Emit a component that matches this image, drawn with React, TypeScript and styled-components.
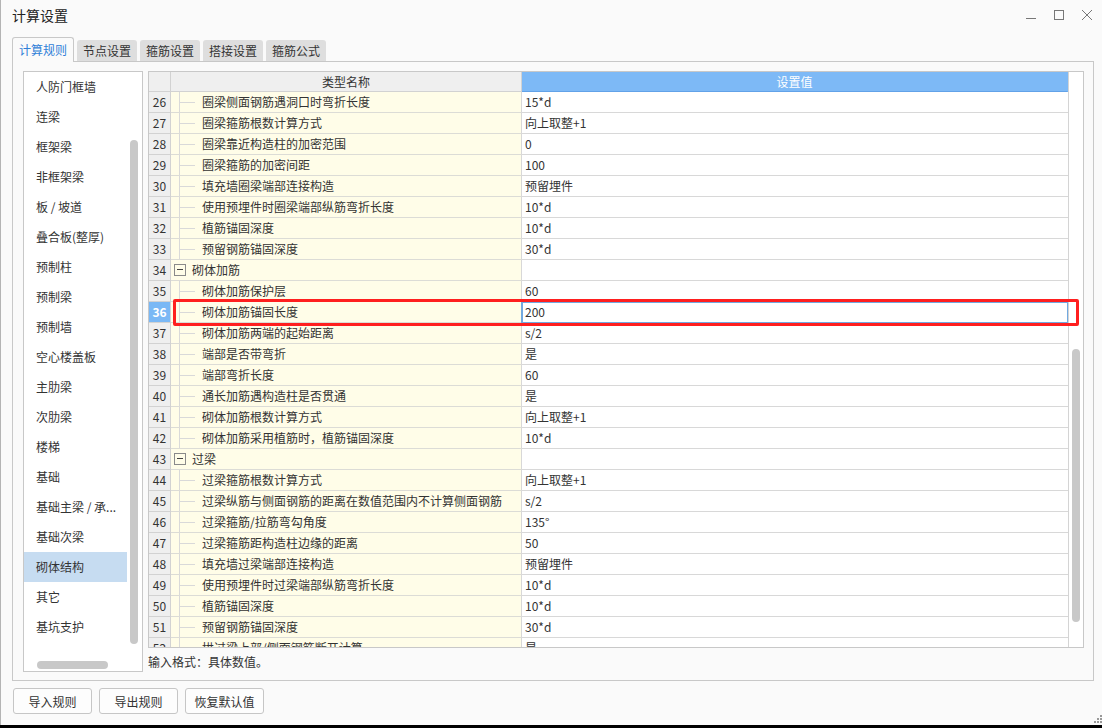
import React from "react";
import styled, { createGlobalStyle } from "styled-components";

const FONT = `"Microsoft YaHei", "Noto Sans CJK SC", "Noto Sans", sans-serif`;

const Global = createGlobalStyle`
  html, body { margin: 0; padding: 0; background: #000; }
  body { font-family: ${FONT}; font-size: 12px; color: #333; }
  * { box-sizing: border-box; }
`;

const Window = styled.div`
  position: relative;
  width: 1102px;
  height: 725px;
  background: #fafafa;
  border-left: 1px solid #b4b4b4;
  display: flex;
  flex-direction: column;
  overflow: hidden;
`;

const TitleBar = styled.div`
  height: 30px;
  display: flex;
  align-items: center;
  justify-content: space-between;
  padding: 0 9px 0 11px;
`;

const Title = styled.div`
  font-size: 14px;
  line-height: 20px;
  color: #222;
`;

const Controls = styled.div`
  display: flex;
  align-items: center;
  gap: 16px;
`;

const TabRow = styled.div`
  height: 31px;
  display: flex;
  align-items: flex-end;
  padding-left: 11px;
`;

const Tab = styled.div<{ $active?: boolean }>`
  position: relative;
  z-index: 1;
  width: ${(p) => (p.$active ? "62px" : "60px")};
  height: ${(p) => (p.$active ? "25px" : "21px")};
  margin-bottom: ${(p) => (p.$active ? "-1px" : "0")};
  margin-left: ${(p) => (p.$active ? "0" : "3px")};
  background: ${(p) => (p.$active ? "#fafafa" : "#dedede")};
  border: ${(p) => (p.$active ? "1px solid #c8c8c8" : "none")};
  border-bottom: none;
  border-radius: 3px 3px 0 0;
  color: ${(p) => (p.$active ? "#2f80d8" : "#333")};
  display: flex;
  align-items: center;
  justify-content: center;
  font-size: 12px;
  line-height: 20px;
`;

const Panel = styled.div`
  margin: 0 8px 0 11px;
  height: 620px;
  border: 1px solid #c8c8c8;
  display: flex;
  gap: 5px;
  padding: 9px 9px 8px 10px;
`;

const List = styled.div`
  width: 120px;
  height: 601px;
  border: 1px solid #c8c8c8;
  background: #fff;
  display: flex;
  flex-direction: column;
`;

const ListMain = styled.div`
  height: 583px;
  display: flex;
`;

const Items = styled.div`
  width: 103px;
  display: flex;
  flex-direction: column;
`;

const Item = styled.div<{ $selected?: boolean }>`
  height: 30px;
  line-height: 30px;
  padding-left: 12px;
  white-space: nowrap;
  overflow: hidden;
  color: #333;
  background: ${(p) => (p.$selected ? "#c6dcf1" : "transparent")};
`;

const VTrack = styled.div`
  width: 15px;
  display: flex;
  flex-direction: column;
`;

const VThumb = styled.div<{ $top: number; $h: number }>`
  margin-left: 3px;
  margin-top: ${(p) => p.$top}px;
  width: 8px;
  height: ${(p) => p.$h}px;
  border-radius: 4px;
  background: #c8c8c8;
`;

const HTrack = styled.div`
  height: 16px;
  display: flex;
`;

const HThumb = styled.div`
  margin-left: 13px;
  margin-top: 6px;
  width: 71px;
  height: 8px;
  border-radius: 4px;
  background: #c8c8c8;
`;

const RightCol = styled.div`
  width: 936px;
  display: flex;
  flex-direction: column;
`;

const Table = styled.div`
  position: relative;
  height: 578px;
  border: 1px solid #c8c8c8;
  background: #fff;
  display: flex;
  overflow: hidden;
`;

const Grid = styled.div`
  width: 919px;
  display: flex;
  flex-direction: column;
`;

const RowGrid = styled.div`
  display: grid;
  grid-template-columns: 22px 351px 1fr;
  flex-shrink: 0;
`;

const HeadRow = styled(RowGrid)`
  height: 20px;
`;

const HeadCell = styled.div<{ $blue?: boolean }>`
  background: ${(p) => (p.$blue ? "#7db9f6" : "#efefef")};
  color: ${(p) => (p.$blue ? "#fff" : "#333")};
  border-right: 1px solid ${(p) => (p.$blue ? "#7db9f6" : "#d2d2d2")};
  border-bottom: 1px solid ${(p) => (p.$blue ? "#62a2e8" : "#d2d2d2")};
  display: flex;
  align-items: center;
  justify-content: center;
  line-height: 19px;
`;

const Body = styled.div`
  flex: 1;
  overflow: hidden;
  display: flex;
  flex-direction: column;
`;

const Row = styled(RowGrid)`
  height: 21px;
`;

const NumCell = styled.div<{ $sel?: boolean }>`
  background: ${(p) => (p.$sel ? "#7ab8f5" : "#efefef")};
  color: ${(p) => (p.$sel ? "#fff" : "#333")};
  font-weight: ${(p) => (p.$sel ? 700 : 400)};
  border-right: 1px solid #d2d2d2;
  border-bottom: 1px solid #d2d2d2;
  text-align: center;
  line-height: 20px;
`;

const NameCell = styled.div<{ $group?: boolean }>`
  background: #fffde8;
  border-right: 1px solid #d8d8d8;
  border-bottom: 1px solid #dcdcd6;
  display: flex;
  align-items: stretch;
  padding-left: ${(p) => (p.$group ? "3px" : "0")};
  line-height: 20px;
  white-space: nowrap;
  overflow: hidden;
`;

const TreeGuide = styled.span`
  width: 31px;
  flex-shrink: 0;
  background:
    linear-gradient(#d9d9d9, #d9d9d9) 8px 0 / 1px 100% no-repeat,
    linear-gradient(#d9d9d9, #d9d9d9) 8px 10px / 16px 1px no-repeat;
`;

const Toggle = styled.span`
  align-self: center;
  position: relative;
  width: 12px;
  height: 12px;
  border: 1px solid #8a8a8a;
  margin-right: 6px;
  flex-shrink: 0;
  &::after {
    content: "";
    position: absolute;
    left: 2px;
    top: 4px;
    width: 6px;
    height: 1px;
    background: #444;
  }
`;

const ValueCell = styled.div<{ $edit?: boolean }>`
  border-bottom: 1px solid #d8d8d8;
  padding-left: 3px;
  line-height: 20px;
  white-space: nowrap;
  overflow: hidden;
  outline: ${(p) => (p.$edit ? "2px solid #72a9e0" : "none")};
  outline-offset: -1px;
`;

const STrack = styled.div`
  flex: 1;
  border-left: 1px solid #d4d4d4;
  display: flex;
  flex-direction: column;
`;

const Marker = styled.div`
  position: absolute;
  left: 24px;
  width: 906px;
  height: 27px;
  border: 3px solid #ff1f1f;
  border-radius: 2px;
  pointer-events: none;
`;

const Hint = styled.div`
  margin-top: 4px;
  line-height: 20px;
  color: #333;
`;

const ButtonRow = styled.div`
  margin-top: 7px;
  padding-left: 12px;
  display: flex;
  gap: 7px;
`;

const Button = styled.button`
  width: 79px;
  height: 26px;
  border: 1px solid #c6c6c6;
  border-radius: 3px;
  background: #fdfdfd;
  font-family: ${FONT};
  font-size: 12px;
  color: #333;
  padding: 0;
`;

const Grip = styled.svg`
  position: absolute;
  right: 0;
  bottom: 2px;
`;

const listItems = [
  "人防门框墙",
  "连梁",
  "框架梁",
  "非框架梁",
  "板 / 坡道",
  "叠合板(整厚)",
  "预制柱",
  "预制梁",
  "预制墙",
  "空心楼盖板",
  "主肋梁",
  "次肋梁",
  "楼梯",
  "基础",
  "基础主梁 / 承...",
  "基础次梁",
  "砌体结构",
  "其它",
  "基坑支护",
];

type R = { n: number; name: string; value: string; group?: boolean };
const rows: R[] = [
  { n: 26, name: "圈梁侧面钢筋遇洞口时弯折长度", value: "15*d" },
  { n: 27, name: "圈梁箍筋根数计算方式", value: "向上取整+1" },
  { n: 28, name: "圈梁靠近构造柱的加密范围", value: "0" },
  { n: 29, name: "圈梁箍筋的加密间距", value: "100" },
  { n: 30, name: "填充墙圈梁端部连接构造", value: "预留埋件" },
  { n: 31, name: "使用预埋件时圈梁端部纵筋弯折长度", value: "10*d" },
  { n: 32, name: "植筋锚固深度", value: "10*d" },
  { n: 33, name: "预留钢筋锚固深度", value: "30*d" },
  { n: 34, name: "砌体加筋", value: "", group: true },
  { n: 35, name: "砌体加筋保护层", value: "60" },
  { n: 36, name: "砌体加筋锚固长度", value: "200" },
  { n: 37, name: "砌体加筋两端的起始距离", value: "s/2" },
  { n: 38, name: "端部是否带弯折", value: "是" },
  { n: 39, name: "端部弯折长度", value: "60" },
  { n: 40, name: "通长加筋遇构造柱是否贯通", value: "是" },
  { n: 41, name: "砌体加筋根数计算方式", value: "向上取整+1" },
  { n: 42, name: "砌体加筋采用植筋时，植筋锚固深度", value: "10*d" },
  { n: 43, name: "过梁", value: "", group: true },
  { n: 44, name: "过梁箍筋根数计算方式", value: "向上取整+1" },
  { n: 45, name: "过梁纵筋与侧面钢筋的距离在数值范围内不计算侧面钢筋", value: "s/2" },
  { n: 46, name: "过梁箍筋/拉筋弯勾角度", value: "135°" },
  { n: 47, name: "过梁箍筋距构造柱边缘的距离", value: "50" },
  { n: 48, name: "填充墙过梁端部连接构造", value: "预留埋件" },
  { n: 49, name: "使用预埋件时过梁端部纵筋弯折长度", value: "10*d" },
  { n: 50, name: "植筋锚固深度", value: "10*d" },
  { n: 51, name: "预留钢筋锚固深度", value: "30*d" },
  { n: 52, name: "拱过梁上部/侧面钢筋断开计算", value: "是" },
];

const SELECTED = 36;
const selIndex = rows.findIndex((r) => r.n === SELECTED);

export default function App() {
  return (
    <>
      <Global />
      <Window>
        <TitleBar>
          <Title>计算设置</Title>
          <Controls>
            <svg width="12" height="12" viewBox="0 0 12 12">
              <line x1="1" y1="9.5" x2="11" y2="9.5" stroke="#777" strokeWidth="1" />
            </svg>
            <svg width="12" height="12" viewBox="0 0 12 12">
              <rect x="1.5" y="1.5" width="9" height="9" fill="none" stroke="#777" strokeWidth="1" />
            </svg>
            <svg width="12" height="12" viewBox="0 0 12 12">
              <path d="M1 1 L11 11 M11 1 L1 11" stroke="#777" strokeWidth="1" />
            </svg>
          </Controls>
        </TitleBar>
        <TabRow>
          <Tab $active>计算规则</Tab>
          <Tab>节点设置</Tab>
          <Tab>箍筋设置</Tab>
          <Tab>搭接设置</Tab>
          <Tab>箍筋公式</Tab>
        </TabRow>
        <Panel>
          <List>
            <ListMain>
              <Items>
                {listItems.map((t) => (
                  <Item key={t} $selected={t === "砌体结构"}>
                    {t}
                  </Item>
                ))}
              </Items>
              <VTrack>
                <VThumb $top={68} $h={504} />
              </VTrack>
            </ListMain>
            <HTrack>
              <HThumb />
            </HTrack>
          </List>
          <RightCol>
            <Table>
              <Grid>
                <HeadRow>
                  <HeadCell />
                  <HeadCell>类型名称</HeadCell>
                  <HeadCell $blue>设置值</HeadCell>
                </HeadRow>
                <Body>
                  {rows.map((r) => (
                    <Row key={r.n}>
                      <NumCell $sel={r.n === SELECTED}>{r.n}</NumCell>
                      <NameCell $group={r.group}>
                        {r.group ? <Toggle /> : <TreeGuide />}
                        {r.name}
                      </NameCell>
                      <ValueCell $edit={r.n === SELECTED}>{r.value}</ValueCell>
                    </Row>
                  ))}
                </Body>
              </Grid>
              <STrack>
                <VThumb $top={277} $h={273} />
              </STrack>
              <Marker style={{ top: 20 + selIndex * 21 - 3 }} />
            </Table>
            <Hint>输入格式：具体数值。</Hint>
          </RightCol>
        </Panel>
        <ButtonRow>
          <Button>导入规则</Button>
          <Button>导出规则</Button>
          <Button>恢复默认值</Button>
        </ButtonRow>
        <Grip width="8" height="8" viewBox="0 0 8 8">
          <rect x="6" y="0" width="2" height="2" fill="#999" />
          <rect x="3" y="3" width="2" height="2" fill="#999" />
          <rect x="6" y="3" width="2" height="2" fill="#999" />
          <rect x="0" y="6" width="2" height="2" fill="#999" />
          <rect x="3" y="6" width="2" height="2" fill="#999" />
          <rect x="6" y="6" width="2" height="2" fill="#999" />
        </Grip>
      </Window>
    </>
  );
}
